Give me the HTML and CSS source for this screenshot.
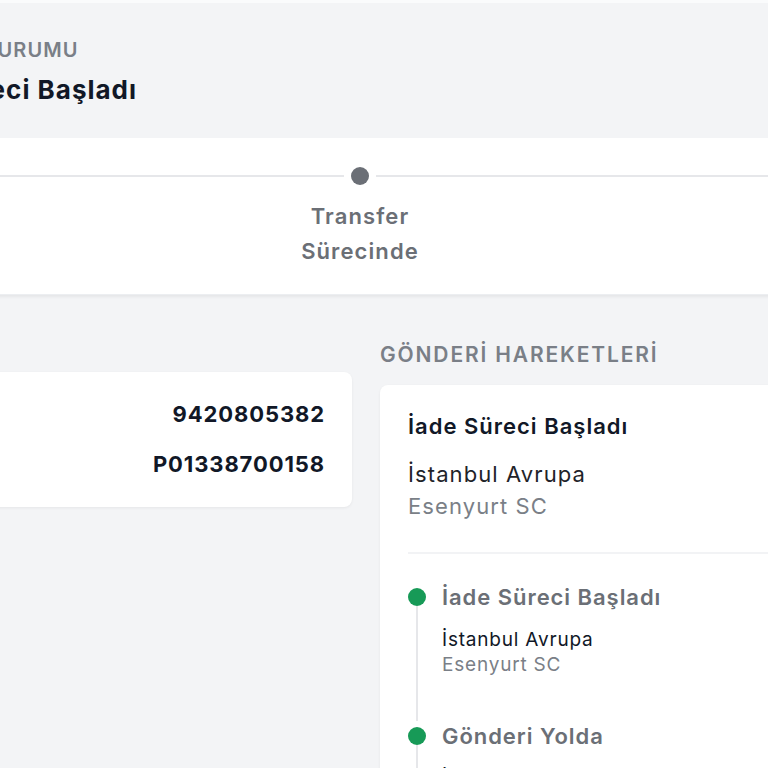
FILE: index.html
```html
<!DOCTYPE html>
<html lang="tr">
<head>
<meta charset="utf-8">
<title>Gönderi Takip</title>
<link rel="stylesheet" href="styles.css">
</head>
<body>
<div class="viewport">
  <div class="page">
    <header class="status">
      <div class="status-label">GÖNDERİ DURUMU</div>
      <div class="status-title">İade Süreci Başladı</div>
    </header>

    <section class="stepper">
      <div class="step">
        <div class="track"><span class="seg"></span><span class="node"></span><span class="seg"></span></div>
        <div class="step-label">Gönderi<br>Alındı</div>
      </div>
      <div class="step">
        <div class="track"><span class="seg"></span><span class="node"></span><span class="seg"></span></div>
        <div class="step-label">Transfer<br>Sürecinde</div>
      </div>
      <div class="step">
        <div class="track"><span class="seg"></span><span class="node"></span><span class="seg"></span></div>
        <div class="step-label">Teslim<br>Edildi</div>
      </div>
    </section>

    <main class="content">
      <div class="col-left">
        <div class="card info">
          <div class="info-row"><span class="info-value">9420805382</span></div>
          <div class="info-row"><span class="info-value">P01338700158</span></div>
        </div>
      </div>
      <div class="col-right">
        <h2 class="section-title">GÖNDERİ HAREKETLERİ</h2>
        <div class="card moves">
          <div class="latest">
            <div class="latest-title">İade Süreci Başladı</div>
            <div class="latest-loc">
              <div class="loc-main">İstanbul Avrupa</div>
              <div class="loc-sub">Esenyurt SC</div>
            </div>
          </div>
          <div class="divider"></div>
          <ol class="timeline">
            <li class="event">
              <div class="rail"><span class="dot"></span><span class="line"></span></div>
              <div class="event-body">
                <div class="event-title">İade Süreci Başladı</div>
                <div class="event-loc">
                  <div class="ev-main">İstanbul Avrupa</div>
                  <div class="ev-sub">Esenyurt SC</div>
                </div>
              </div>
            </li>
            <li class="event">
              <div class="rail"><span class="dot"></span><span class="line"></span></div>
              <div class="event-body">
                <div class="event-title">Gönderi Yolda</div>
                <div class="event-loc">
                  <div class="ev-main">İstanbul Avrupa</div>
                  <div class="ev-sub">Esenyurt SC</div>
                </div>
              </div>
            </li>
          </ol>
        </div>
      </div>
    </main>
  </div>
</div>
</body>
</html>
```

FILE: styles.css
```css
* { box-sizing: border-box; }
html, body { margin: 0; padding: 0; }
body {
  background: #f3f4f6;
  font-family: Inter, "Noto Sans", "Liberation Sans", sans-serif;
  color: #111827;
}
.viewport {
  width: 768px;
  height: 768px;
  overflow: hidden;
}
.page {
  width: 1450px;
  margin-left: -365px;
  background: #f3f4f6;
  min-height: 768px;
}

/* header */
.status {
  background: #f3f4f6;
  border-top: 3px solid #fafbfc;
  padding: 35px 24px 31px 243px;
}
.status-label {
  font-size: 20px;
  line-height: 24px;
  font-weight: 600;
  letter-spacing: 1.05px;
  color: #7a7f87;
}
.status-title {
  margin-top: 11px;
  font-size: 26px;
  line-height: 34px;
  font-weight: 700;
  letter-spacing: 1px;
  color: #111827;
}

/* stepper */
.stepper {
  background: #ffffff;
  display: grid;
  grid-template-columns: repeat(3, 1fr);
  padding: 29px 0 25px;
  box-shadow: 0 2px 3px rgba(0,0,0,0.06);
  border-bottom: 1px solid #eceef1;
}
.step {
  display: flex;
  flex-direction: column;
  align-items: center;
}
.track {
  width: 100%;
  display: flex;
  align-items: center;
  gap: 7px;
}
.seg {
  flex: 1;
  height: 2px;
  background: #e6e7ea;
}
.node {
  width: 18px;
  height: 18px;
  border-radius: 50%;
  background: #6b6f76;
}
.step-label {
  margin-top: 14px;
  text-align: center;
  font-size: 22px;
  line-height: 35px;
  font-weight: 600;
  letter-spacing: 1.1px;
  color: #6b6f76;
}

/* content */
.content {
  display: grid;
  grid-template-columns: 453px 1fr;
  gap: 28px;
  padding: 46px 24px 0 264px;
  align-items: start;
}
.card {
  background: #ffffff;
  border-radius: 8px;
  box-shadow: 0 1px 3px rgba(0,0,0,0.06);
}
.col-left { padding-top: 31px; }
.info {
  padding: 27px 27px 28px;
  display: flex;
  flex-direction: column;
  gap: 20px;
}
.info-row {
  display: flex;
  justify-content: flex-end;
}
.info-value {
  font-size: 22px;
  line-height: 30px;
  font-weight: 700;
  letter-spacing: 0.9px;
  color: #111827;
}

.section-title {
  margin: 0 0 16px;
  font-size: 21px;
  line-height: 28px;
  font-weight: 600;
  letter-spacing: 1.85px;
  color: #7a7f87;
}
.moves {
  padding: 26px 28px 0;
  min-height: 600px;
}
.latest-title {
  font-size: 22px;
  line-height: 30px;
  font-weight: 600;
  letter-spacing: 1px;
  color: #111827;
}
.latest-loc {
  margin-top: 17px;
  font-size: 22px;
  line-height: 32px;
  letter-spacing: 1.1px;
}
.loc-main { color: #1f2329; }
.loc-sub { color: #7a7f87; }
.divider {
  margin-top: 30px;
  height: 2px;
  background: #f2f3f5;
}
.timeline {
  list-style: none;
  margin: 0;
  padding: 28px 0 0;
}
.event {
  display: grid;
  grid-template-columns: 18px 1fr;
  column-gap: 16px;
}
.rail {
  display: flex;
  flex-direction: column;
  align-items: center;
  padding-top: 6px;
}
.dot {
  width: 18px;
  height: 18px;
  border-radius: 50%;
  background: #179a57;
  flex: none;
}
.line {
  flex: 1;
  width: 2px;
  background: #e6e7ea;
}
.event-body { padding-bottom: 44px; }
.event-title {
  font-size: 22px;
  line-height: 30px;
  font-weight: 600;
  letter-spacing: 0.95px;
  color: #6b6f76;
}
.event-loc {
  margin-top: 15px;
  font-size: 19px;
  line-height: 25px;
  letter-spacing: 0.8px;
}
.ev-main { color: #111827; }
.ev-sub { color: #7a7f87; }
```
